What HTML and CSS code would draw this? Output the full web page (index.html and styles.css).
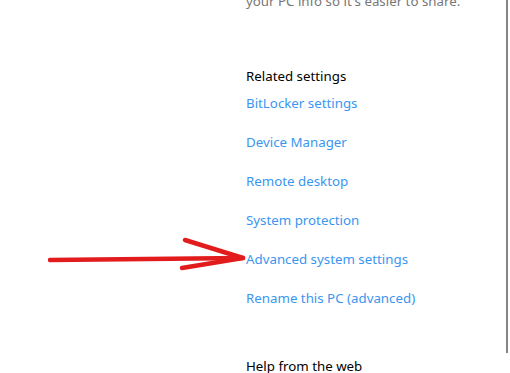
FILE: index.html
```html
<!DOCTYPE html>
<html lang="en">
  <head>
    <meta charset="UTF-8" />
    <title>About - Related settings</title>
    <link rel="stylesheet" href="styles.css">
  </head>
  <body>
    <div class="window">
      <div class="content">
        <p class="note">your PC info so it's easier to share.</p>

        <!-- Related settings -->
        <h2 class="section-title">Related settings</h2>
        <ul class="links">
          <li><a href="#">BitLocker settings</a></li>
          <li><a href="#">Device Manager</a></li>
          <li><a href="#">Remote desktop</a></li>
          <li><a href="#">System protection</a></li>
          <li><a href="#">Advanced system settings</a></li>
          <li><a href="#">Rename this PC (advanced)</a></li>
        </ul>

        <h2 class="section-title help">Help from the web</h2>

        <!-- Annotation arrow -->
        <svg class="arrow" width="200" height="40" viewBox="0 0 200 40">
          <path d="M2 28 L195 26" />
          <path d="M137 8 L195 26 L134 36" />
        </svg>
      </div>
      <div class="scrollbar"><div class="thumb"></div></div>
    </div>
  </body>
</html>
```

FILE: styles.css
```css
/* Global */
body {
  margin: 0;
  background-color: #fff;
  font-family: "Segoe UI", "Noto Sans", sans-serif;
  color: #000;
}

.window {
  display: flex;
  height: 373px;
  overflow: hidden;
}

.content {
  position: relative;
  flex: 1;
  padding-left: 246px;
}

.note {
  margin: -9px 0 0;
  font-size: 13.3px;
  line-height: 20px;
  color: #777;
}

.section-title {
  margin: 55px 0 0;
  font-size: 13.3px;
  font-weight: 400;
  line-height: 20px;
}

.help {
  margin-top: 36px;
}

.links {
  list-style: none;
  margin: 0;
  padding: 0;
}

.links li {
  height: 39px;
  line-height: 20px;
  padding-top: 7px;
  box-sizing: border-box;
  font-size: 13.3px;
}

.links a {
  color: #3a96f0;
  text-decoration: none;
}

/* Red arrow pointing at the link */
.arrow {
  position: absolute;
  left: 48px;
  top: 232px;
}

.arrow path {
  fill: none;
  stroke: #e21c1c;
  stroke-width: 4.5;
  stroke-linecap: round;
  stroke-linejoin: round;
}

.scrollbar {
  width: 4px;
  height: 353px;
}

.thumb {
  width: 2px;
  height: 100%;
  background-color: #858585;
}
```
